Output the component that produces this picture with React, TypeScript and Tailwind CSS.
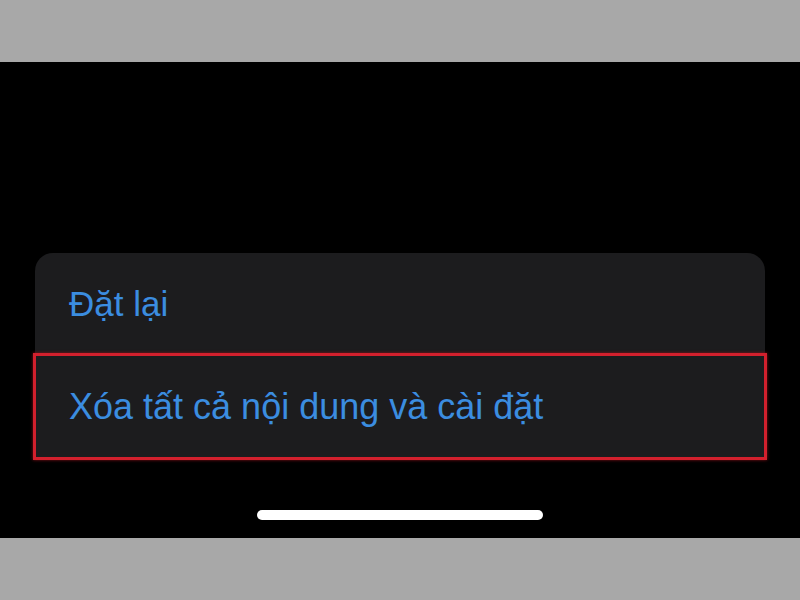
const ROWS = ["Đặt lại", "Xóa tất cả nội dung và cài đặt"];

const App = () => {
  return (
    <div className="flex h-[600px] w-[800px] flex-col bg-black font-['Liberation_Sans',Arial,sans-serif]">
      <div className="h-[62px] bg-[#a8a8a8]" />

      <div className="flex flex-1 flex-col bg-black">
        <div className="mx-[35px] mt-[191px] rounded-t-[18px] bg-[#1c1c1e]">
          <div className="flex h-[100px] items-center pl-[34px]">
            <span className="text-[35px] leading-[35px] text-[#3b8de0]">{ROWS[0]}</span>
          </div>
          <div className="-mx-[2px] flex h-[107px] items-center border-[3px] border-[#d3202d] bg-[#1c1c1e] pl-[33px] shadow-[0_0_3px_#8a1018]">
            <span className="text-[36px] leading-[36px] text-[#3b8de0]">{ROWS[1]}</span>
          </div>
        </div>

        <div className="mx-auto mt-[50px] h-[10px] w-[286px] rounded-full bg-white" />
      </div>

      <div className="h-[62px] bg-[#a8a8a8]" />
    </div>
  );
};

export default App;
